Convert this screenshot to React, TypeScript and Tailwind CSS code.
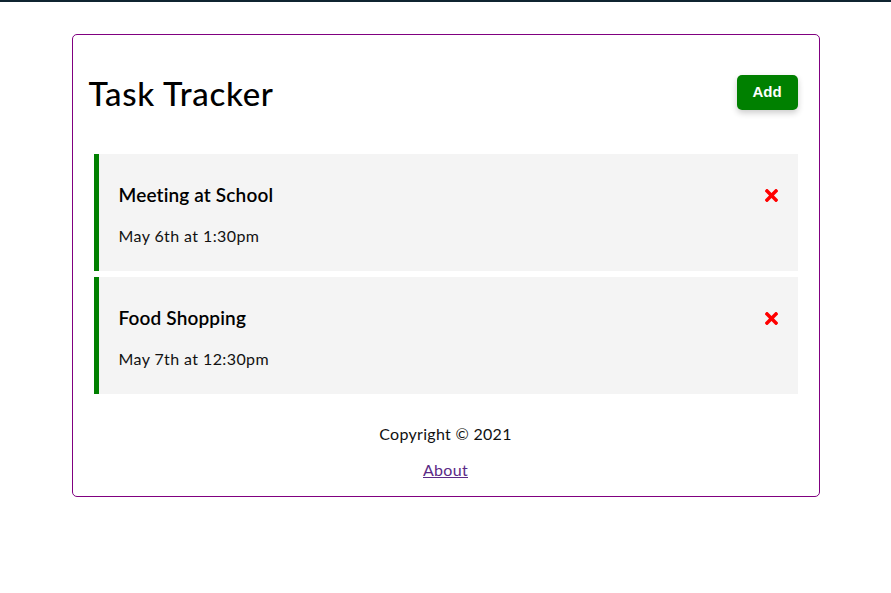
import React from 'react';
import { FaTimes } from 'react-icons/fa';

type Task = { id: number; text: string; day: string };

const tasks: Task[] = [
    { id: 1, text: 'Meeting at School', day: 'May 6th at 1:30pm' },
    { id: 2, text: 'Food Shopping', day: 'May 7th at 12:30pm' },
];

const TaskItem = ({ task }: { task: Task }) => (
    <div className="mx-[5px] bg-[#f4f4f4] border-l-[5px] border-l-[#008000] pl-[20px] pr-[20px] pt-[29px] pb-[23px]">
        <h3 className="flex items-center justify-between text-[19px] leading-[24px] font-semibold tracking-[0.15px] text-black">
            {task.text}
            <FaTimes className="-mr-[3px] text-[#ff0000]" size={19} />
        </h3>
        <p className="mt-[17px] text-[16px] leading-[24px] tracking-[0.4px] text-[#111]">{task.day}</p>
    </div>
);

export default function App() {
    return (
        <div className="min-h-[593px] bg-white" style={{ fontFamily: 'Lato, "Noto Sans", sans-serif' }}>
            {/* thin dark strip at the very top */}
            <div className="h-[2px] bg-[#0f2430]" />

            <div className="mx-auto mt-[32px] w-[748px] rounded-[5px] border border-[#800080] px-[16px] pt-[35px] pb-[14px]">
                {/* Header */}
                <header className="flex h-[45px] items-center justify-between">
                    <h1 className="text-[33px] font-medium leading-[40px] tracking-[0.7px] text-black">Task Tracker</h1>
                    <button
                        className="m-[5px] h-[35px] w-[61px] rounded-[5px] bg-[#008000] text-[15px] font-bold text-white shadow-[0_3px_6px_rgba(0,0,0,0.2)]"
                        style={{ fontFamily: '"Liberation Sans", Arial, sans-serif' }}
                    >
                        Add
                    </button>
                </header>

                {/* Tasks */}
                <div className="mt-[39px] flex flex-col gap-[6px]">
                    {tasks.map((t) => (
                        <TaskItem key={t.id} task={t} />
                    ))}
                </div>

                {/* Footer */}
                <footer className="mt-[28px] flex flex-col items-center text-[16px] leading-[24px] tracking-[0.3px] text-[#111]">
                    <p>Copyright © 2021</p>
                    <a href="#" className="mt-[12px] text-[#5b2a86] underline">
                        About
                    </a>
                </footer>
            </div>
        </div>
    );
}
